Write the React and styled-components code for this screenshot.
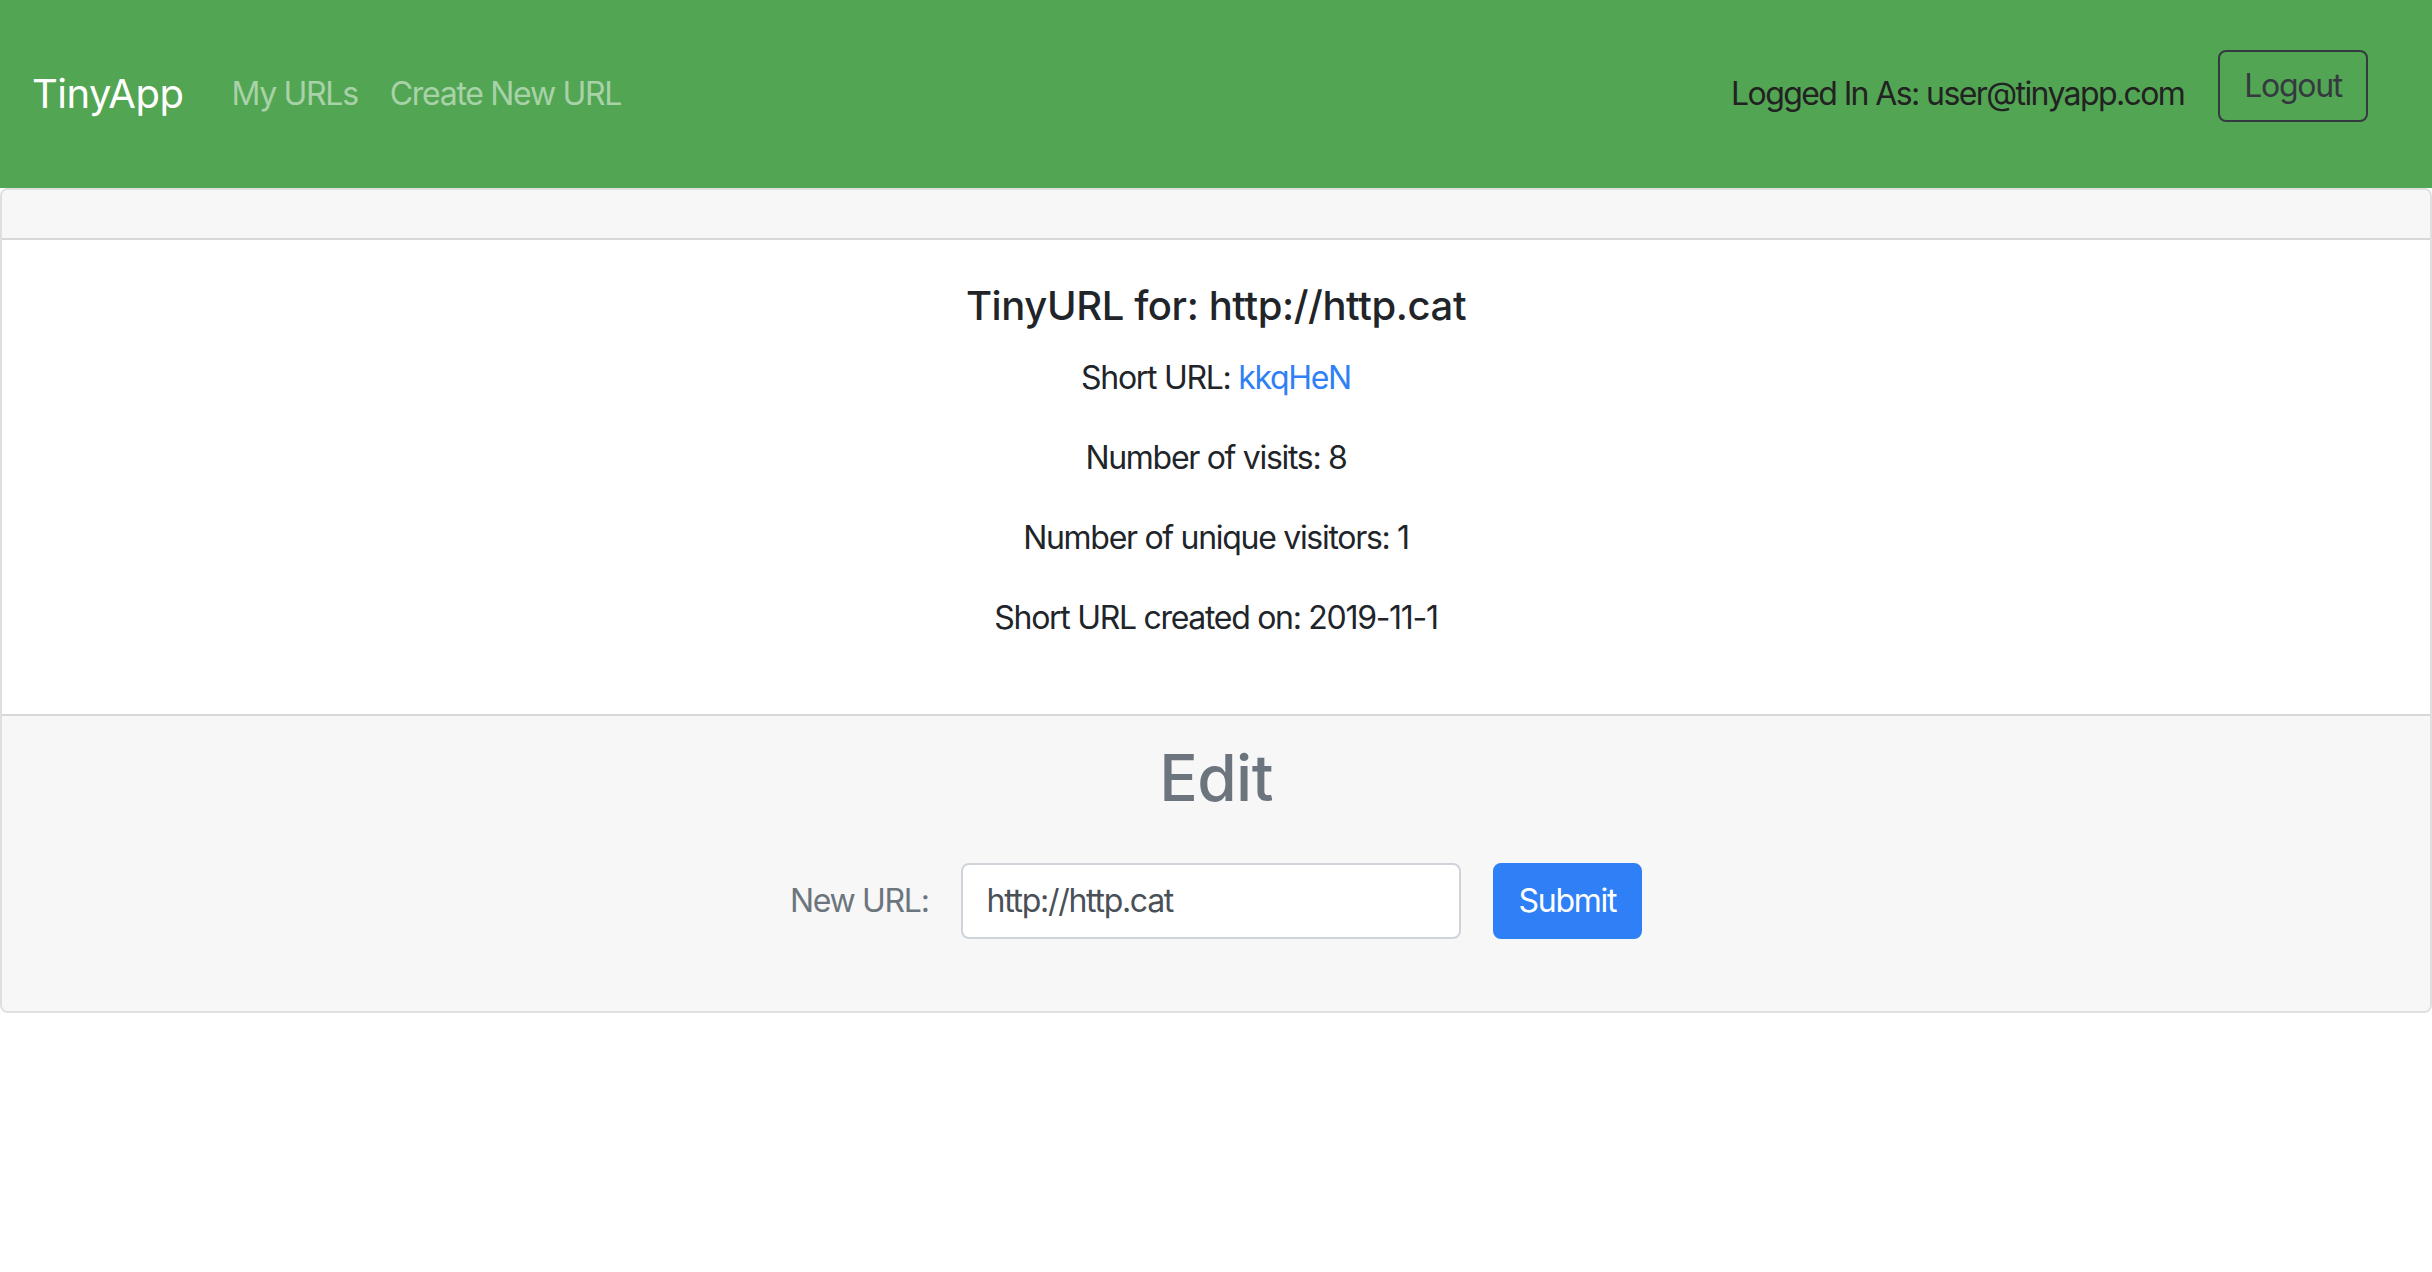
import styled, { createGlobalStyle } from "styled-components";

const GlobalStyle = createGlobalStyle`
  html, body {
    margin: 0;
    padding: 0;
    background: #fff;
  }
  body {
    font-family: "Inter", "Liberation Sans", sans-serif;
    font-size: 32px;
    line-height: 1.5;
    color: #212529;
    letter-spacing: -1.3px;
  }
  * {
    box-sizing: border-box;
  }
`;

const Navbar = styled.nav`
  display: flex;
  align-items: center;
  height: 188px;
  padding: 0 64px 0 32px;
  background-color: #52a552;
`;

const Brand = styled.a`
  color: #fff;
  font-size: 40px;
  letter-spacing: -0.5px;
  margin-right: 32px;
  text-decoration: none;
`;

const NavLink = styled.a`
  color: rgba(255, 255, 255, 0.5);
  padding: 0 16px;
  text-decoration: none;
`;

const NavRight = styled.div`
  margin-left: auto;
  display: flex;
  align-items: center;
  gap: 34px;
`;

const UserText = styled.span`
  color: #222;
  letter-spacing: -1.6px;
`;

const OutlineButton = styled.button`
  font-family: inherit;
  font-size: 32px;
  letter-spacing: inherit;
  line-height: 1.5;
  color: #343a40;
  background: transparent;
  border: 2px solid #343a40;
  border-radius: 8px;
  padding: 10px 24px;
  margin-bottom: 16px;
  cursor: pointer;
`;

const Card = styled.div`
  border: 2px solid rgba(0, 0, 0, 0.125);
  border-radius: 8px;
  background: #fff;
  overflow: hidden;
`;

const CardHeader = styled.div`
  height: 50px;
  background-color: #f7f7f7;
  border-bottom: 2px solid rgba(0, 0, 0, 0.125);
`;

const CardBody = styled.div`
  padding: 42px 40px 40px;
  text-align: center;
`;

const CardTitle = styled.h5`
  margin: 0 0 24px;
  font-size: 40px;
  font-weight: 500;
  line-height: 1.2;
  letter-spacing: -0.4px;
`;

const Stat = styled.p`
  margin: 0 0 32px;
`;

const ShortLink = styled.a`
  color: #2f7ff6;
  text-decoration: none;
`;

const CardFooter = styled.div`
  background-color: #f7f7f7;
  border-top: 2px solid rgba(0, 0, 0, 0.125);
  padding: 24px 40px 72px;
  text-align: center;
`;

const EditTitle = styled.h2`
  margin: 0 0 46px;
  font-size: 64px;
  font-weight: 500;
  line-height: 1.2;
  letter-spacing: -0.6px;
  color: #6c757d;
`;

const EditForm = styled.form`
  display: flex;
  justify-content: center;
  align-items: center;
  gap: 32px;
`;

const Label = styled.label`
  color: #6c757d;
`;

const Input = styled.input`
  width: 500px;
  height: 76px;
  padding: 12px 24px;
  font-family: inherit;
  font-size: 32px;
  letter-spacing: inherit;
  color: #495057;
  background: #fff;
  border: 2px solid #ced4da;
  border-radius: 8px;
  outline: none;
`;

const PrimaryButton = styled.button`
  height: 76px;
  padding: 12px 24px;
  font-family: inherit;
  font-size: 32px;
  letter-spacing: inherit;
  color: #fff;
  background-color: #2f7ff6;
  border: 2px solid #2f7ff6;
  border-radius: 8px;
  cursor: pointer;
`;

const App = () => {
  return (
    <>
      <GlobalStyle />
      <Navbar>
        <Brand href="#">TinyApp</Brand>
        <NavLink href="#">My URLs</NavLink>
        <NavLink href="#">Create New URL</NavLink>
        <NavRight>
          <UserText>Logged In As: user@tinyapp.com</UserText>
          <OutlineButton type="button">Logout</OutlineButton>
        </NavRight>
      </Navbar>
      <Card>
        <CardHeader />
        <CardBody>
          <CardTitle>TinyURL for: http://http.cat</CardTitle>
          <Stat>
            Short URL: <ShortLink href="#">kkqHeN</ShortLink>
          </Stat>
          <Stat>Number of visits: 8</Stat>
          <Stat>Number of unique visitors: 1</Stat>
          <Stat>Short URL created on: 2019-11-1</Stat>
        </CardBody>
        <CardFooter>
          <EditTitle>Edit</EditTitle>
          <EditForm onSubmit={(e) => e.preventDefault()}>
            <Label htmlFor="longURL">New URL:</Label>
            <Input id="longURL" type="text" defaultValue="http://http.cat" />
            <PrimaryButton type="submit">Submit</PrimaryButton>
          </EditForm>
        </CardFooter>
      </Card>
    </>
  );
};

export default App;
